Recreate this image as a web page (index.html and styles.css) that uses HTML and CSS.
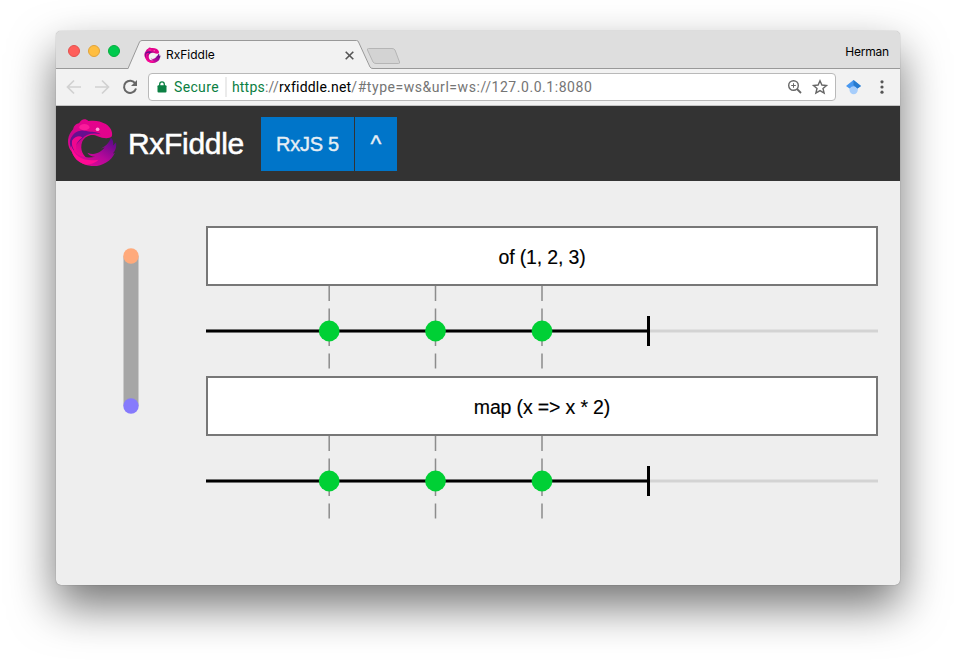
FILE: index.html
```html
<!DOCTYPE html>
<html lang="en">
<head>
<meta charset="utf-8">
<title>RxFiddle</title>
<link rel="stylesheet" href="styles.css">
</head>
<body>
<svg class="defs" width="0" height="0" aria-hidden="true">
  <defs>
    <linearGradient id="eel" x1="0.1" y1="1" x2="0.8" y2="0">
      <stop offset="0" stop-color="#ff0a96"/><stop offset=".4" stop-color="#c8058f"/><stop offset=".62" stop-color="#e0058c"/><stop offset="1" stop-color="#e6008c"/>
    </linearGradient>
    <linearGradient id="fin" x1="0" y1="1" x2="1" y2="0">
      <stop offset="0" stop-color="#f0088f"/><stop offset=".5" stop-color="#b5089a"/><stop offset="1" stop-color="#4a0a86"/>
    </linearGradient>
    <symbol id="logo" viewBox="0 0 50 50">
      <path fill="url(#eel)" d="M6 11 C7 7 9 6 12 5 C14 1 18 0 21 3 C27 2 33 3 38 6 C43 9 45 14 44 18 C41 21 35 20 30 18 C25 15 18 17 15 23 C12 31 16 38 22 41 C17 43 8 38 3 31 C0 25 0 17 6 11Z"/>
      <path fill="#65108f" d="M5 18 C8 13 14 11 20 13 C24 14 29 13 33 16 C25 14 19 16 15 20 C10 24 7 28 6 33 C2 27 2 22 5 18Z"/>
      <path fill="#f0078f" d="M15 19 C8 24 7 30 12 36 C7 33 4 28 5 22 C8 18 12 17 15 19Z"/>
      <path fill="url(#fin)" d="M4 28 C9 38 18 40 28 38 C24 38 21 36 20 34 C27 37 33 34 37 29 L33 30 C39 27 42 23 43 19 C45 21 46 24 45 27 L48 24 C49 29 47 32 45 35 L47 34 C43 43 33 48 24 47 C12 46 4 38 4 28Z"/>
      <path fill="#ff0a94" d="M4 27 C8 39 17 43 31 41 C27 45 20 47 16 45 C9 42 4 36 4 27Z"/>
      <ellipse cx="17" cy="9" rx="5" ry="3" fill="#fa1c9b"/>
      <circle cx="30" cy="11" r="1.8" fill="#ff9bd8"/>
    </symbol>
  </defs>
</svg>
<div class="window">
  <div class="titlebar">
    <div class="lights"><i class="light red"></i><i class="light amber"></i><i class="light green"></i></div>
    <div class="tab">
      <svg class="tab-shape" width="278" height="38" viewBox="0 0 278 38">
        <path d="M0 38L11.500 11Q12.300 9.500 14 9.500H228.500Q230 9.500 230.500 11L242.500 36Q243 37.500 245 37.500V38H0Z" fill="#f2f2f2"/>
        <path d="M0 37.500L11.500 11Q12.300 9.500 14 9.500H228.500Q230 9.500 230.500 11L242 36Q243 37.500 245 37.500H278" fill="none" stroke="#999"/>
        <path d="M240.500 17.500H264Q266 17.500 267 19L271.500 31Q272 32.500 270.500 32.500H248Q246 32.500 245 31L239.500 19Q239 17.500 240.500 17.500Z" fill="#d3d3d3" stroke="#b5b5b5"/>
      </svg>
      <div class="tab-content">
        <svg class="favicon" width="17" height="17"><use href="#logo"/></svg>
        <span class="tab-title">RxFiddle</span>
        <svg class="close" width="9" height="9" viewBox="0 0 9 9"><path d="M.7 .7L8.300 8.300M8.300 .7L.7 8.300" stroke="#555" stroke-width="1.600"/></svg>
      </div>
    </div>
    <span class="user">Herman</span>
  </div>
  <div class="toolbar">
    <svg class="nav" width="92" height="36" viewBox="0 0 92 36" fill="none" stroke-width="1.700">
      <path d="M25 18H12M18 11.500L11.500 18L18 24.500M39 18H52M46 11.500L52.500 18L46 24.500" stroke="#d1d1d1"/>
      <path d="M79.300 14.500A6.100 6.100 0 1 0 80 19.500" stroke="#666" stroke-width="2"/>
      <path d="M81 11V17H75Z" fill="#666"/>
    </svg>
    <div class="omnibox">
      <svg class="lock" width="10" height="12" viewBox="0 0 10 12"><path d="M2.700 5V3.200A2.300 2.300 0 0 1 7.300 3.200V5" fill="none" stroke="#0b8043" stroke-width="1.300"/><rect x=".5" y="4.300" width="9" height="7.200" rx="1" fill="#0b8043"/></svg>
      <span class="secure">Secure</span>
      <span class="url"><span class="scheme">https</span>://<span class="host">rxfiddle.net</span><span class="path">/#type=ws&amp;url=ws://127.0.0.1:8080</span></span>
      <svg class="tools" width="46" height="20" viewBox="0 0 46 20" fill="none" stroke="#666" stroke-width="1.400">
        <circle cx="7.500" cy="8.500" r="4.800"/><path d="M11 12L15 16" stroke-width="1.800"/><path d="M5.200 8.500H9.800M7.500 6.200V10.800" stroke-width="1"/>
        <path d="M34 3.800L35.900 8L40.500 8.500L37 11.500L38.100 16L34 13.600L29.900 16L31 11.500L27.500 8.500L32.100 8Z"/>
      </svg>
    </div>
    <svg class="ext" width="54" height="36" viewBox="0 0 54 36">
      <path d="M13.500 16V21A4 4 0 0 0 21.800 21V16Z" fill="#a6cdfb"/>
      <path d="M17.500 11L25 17L21.500 19.500Q17.500 15 13.500 19.500L10 17Z" fill="#4898f0"/><path d="M17.500 11L25 17L21.500 19.500L17.500 16Z" fill="#277ace"/>
      <g fill="#555"><circle cx="46" cy="12.800" r="1.600"/><circle cx="46" cy="18" r="1.600"/><circle cx="46" cy="23.200" r="1.600"/></g>
    </svg>
  </div>
  <header class="header">
    <svg class="brand-logo" width="51" height="51"><use href="#logo"/></svg>
    <h1 class="brand">RxFiddle</h1>
    <div class="buttons"><span class="button library">RxJS 5</span><span class="button toggle">^</span></div>
  </header>
  <main class="main">
    <svg class="graph" width="150" height="404" viewBox="0 0 150 404">
      <path d="M75 75V225" stroke="#a6a6a6" stroke-width="15"/>
      <circle cx="75" cy="75" r="7.700" fill="#ffaa7b"/><circle cx="75" cy="225" r="7.700" fill="#867afc"/>
    </svg>
    <div class="marbles">
      <div class="operator">of (1, 2, 3)</div>
      <svg class="stream" width="672" height="90" viewBox="0 0 672 90">
        <path d="M0 45H672" stroke="#d3d3d3" stroke-width="3"/>
        <path d="M123.200 0V90M229.500 0V90M336 0V90" stroke="#8c8c8c" stroke-width="1.500" stroke-dasharray="15 7.500"/>
        <path d="M0 45H442" stroke="#000" stroke-width="3"/><path d="M442.500 30V60" stroke="#000" stroke-width="3"/>
        <g fill="#00d035"><circle cx="123.200" cy="45" r="10.400"/><circle cx="229.500" cy="45" r="10.400"/><circle cx="336" cy="45" r="10.400"/></g>
      </svg>
      <div class="operator">map (x =&gt; x * 2)</div>
      <svg class="stream" width="672" height="90" viewBox="0 0 672 90">
        <path d="M0 45H672" stroke="#d3d3d3" stroke-width="3"/>
        <path d="M123.200 0V90M229.500 0V90M336 0V90" stroke="#8c8c8c" stroke-width="1.500" stroke-dasharray="15 7.500"/>
        <path d="M0 45H442" stroke="#000" stroke-width="3"/><path d="M442.500 30V60" stroke="#000" stroke-width="3"/>
        <g fill="#00d035"><circle cx="123.200" cy="45" r="10.400"/><circle cx="229.500" cy="45" r="10.400"/><circle cx="336" cy="45" r="10.400"/></g>
      </svg>
    </div>
  </main>
</div>
</body>
</html>
```
FILE: styles.css
```css
* { box-sizing: border-box; }
html, body { margin: 0; height: 100%; overflow: hidden; background: #fff; }
body { padding: 31px 56px 0; font-family: "Liberation Sans", Arial, sans-serif; }
svg { display: block; flex: none; }
.defs { position: absolute; }
.window {
  width: 844px; height: 554px; border-radius: 5px; background: #eee;
  box-shadow: 0 0 1px rgba(0,0,0,.5), 0 21px 45px rgba(0,0,0,.55);
}
.titlebar {
  display: flex; height: 38px; border-radius: 5px 5px 0 0;
  background: linear-gradient(#999, #999) bottom / 100% 1px no-repeat, #dedede;
}
.lights { display: flex; gap: 8px; padding: 14px 0 0 12px; width: 72px; }
.light { width: 12px; height: 12px; border-radius: 50%; border: 1px solid; }
.red { background: #ff5f5b; border-color: #e3514e; }
.amber { background: #ffbe41; border-color: #e1a33a; }
.green { background: #00ca4e; border-color: #07ad3e; }
.tab { display: grid; }
.tab-shape, .tab-content { grid-area: 1 / 1; }
.tab-content { display: flex; align-items: center; width: 226px; padding: 10px 0 0 16px; height: 38px; }
.tab-title { flex: 1; margin-left: 5px; font: 12px/16px Inter, sans-serif; }
.user { margin-left: auto; padding: 13px 11px 0 0; font: 12px/16px Inter, sans-serif; letter-spacing: -.2px; }
.toolbar {
  display: flex; align-items: center; height: 37px; background: #f2f2f2; border-bottom: 1px solid #c4c4c4;
}
.omnibox {
  display: flex; align-items: center; width: 688px; height: 28px; padding: 0 3px 0 8px;
  background: #fff; border: 1px solid #b9b9b9; border-radius: 4px;
  font: 14px/26px Roboto, sans-serif; color: #757575;
}
.secure { margin-left: 7px; padding-right: 6px; color: #0b8043; border-right: 2px solid #ebebeb; line-height: 20px; letter-spacing: .35px; }
.url { margin-left: 5px; flex: 1; letter-spacing: .2px; }
.scheme { color: #0b8043; }
.host { color: #000; letter-spacing: .2px; }
.path { letter-spacing: .55px; }
.header { display: flex; align-items: center; height: 75px; padding-left: 11px; background: #333; }
.brand { margin: 0 16px 0 10px; width: 117px; font-size: 30px; line-height: 40px; font-weight: 400; letter-spacing: -.3px; color: #fff; -webkit-text-stroke: .5px #fff; }
.buttons { display: flex; gap: 1px; }
.button { height: 54px; line-height: 54px; text-align: center; font-size: 20px; background: #0075c9; color: #e6eef4; -webkit-text-stroke: .4px #e6eef4; }
.library { width: 93px; letter-spacing: -.25px; }
.toggle { width: 42px; font-size: 23px; line-height: 55px; }
.main { display: flex; height: 404px; }
.marbles { width: 672px; padding-top: 45px; }
.operator { height: 60px; border: 2px solid #777; background: #fff; color: #000; font-size: 19.500px; line-height: 58px; text-align: center; letter-spacing: -.15px; -webkit-text-stroke: .15px #000; }
```
